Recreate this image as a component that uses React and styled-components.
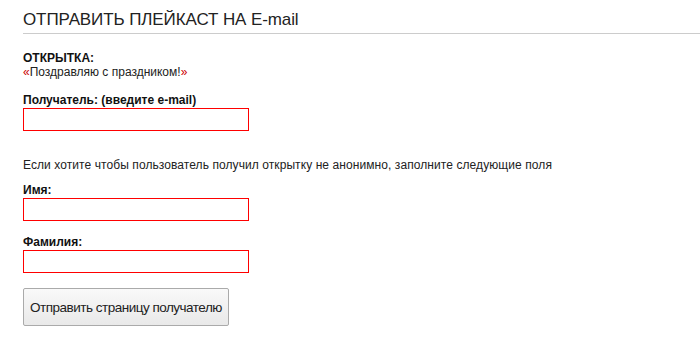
import styled, { createGlobalStyle } from 'styled-components'

const GlobalStyle = createGlobalStyle`
  html, body {
    margin: 0;
    padding: 0;
    background: #fff;
  }
  body {
    font-family: "Liberation Sans", Arial, sans-serif;
    color: #222;
  }
`

const Page = styled.div`
  width: 700px;
  height: 343px;
  overflow: hidden;
  padding: 11px 0 0 23px;
  box-sizing: border-box;
`

const Title = styled.h1`
  margin: 0;
  padding-bottom: 4px;
  font-weight: normal;
  font-size: 17px;
  line-height: 18px;
  letter-spacing: -0.1px;
  color: #222;
  border-bottom: 1px solid #ccc;
`

const Form = styled.form`
  display: flex;
  flex-direction: column;
  padding-top: 17px;
`

const Label = styled.div`
  font-size: 12px;
  line-height: 14px;
  font-weight: bold;
  color: #111;
  margin-top: ${(p) => p.gap || 0}px;
`

const Quote = styled.div`
  font-size: 12px;
  line-height: 14px;
  color: #222;
  > span {
    color: #c00;
  }
`

const Note = styled.p`
  margin: 27px 0 0;
  font-size: 12px;
  line-height: 14px;
  letter-spacing: 0.08px;
  color: #222;
`

const Input = styled.input`
  display: block;
  width: 226px;
  height: 23px;
  box-sizing: border-box;
  margin-top: 1px;
  border: 1px solid #f00;
  background: #fff;
  outline: none;
  padding: 2px 4px;
  font: 12px "Liberation Sans", Arial, sans-serif;
`

const Submit = styled.button`
  align-self: flex-start;
  margin-top: 15px;
  width: 206px;
  height: 38px;
  border: 1px solid #aaa;
  border-radius: 2px;
  background: linear-gradient(#f9f9f9, #e9e9e9);
  font: 13.5px "Liberation Sans", Arial, sans-serif;
  letter-spacing: -0.5px;
  white-space: nowrap;
  color: #222;
  padding: 0;
  cursor: pointer;
`

export default function App() {
  return (
    <>
      <GlobalStyle />
      <Page>
        <Title>ОТПРАВИТЬ ПЛЕЙКАСТ НА E-mail</Title>
        <Form onSubmit={(e) => e.preventDefault()}>
          <Label>ОТКРЫТКА:</Label>
          <Quote>
            <span>«</span>Поздравляю с праздником!<span>»</span>
          </Quote>
          <Label gap={14}>Получатель: (введите e-mail)</Label>
          <Input type="text" />
          <Note>Если хотите чтобы пользователь получил открытку не анонимно, заполните следующие поля</Note>
          <Label gap={11}>Имя:</Label>
          <Input type="text" />
          <Label gap={14}>Фамилия:</Label>
          <Input type="text" />
          <Submit type="submit">Отправить страницу получателю</Submit>
        </Form>
      </Page>
    </>
  )
}
